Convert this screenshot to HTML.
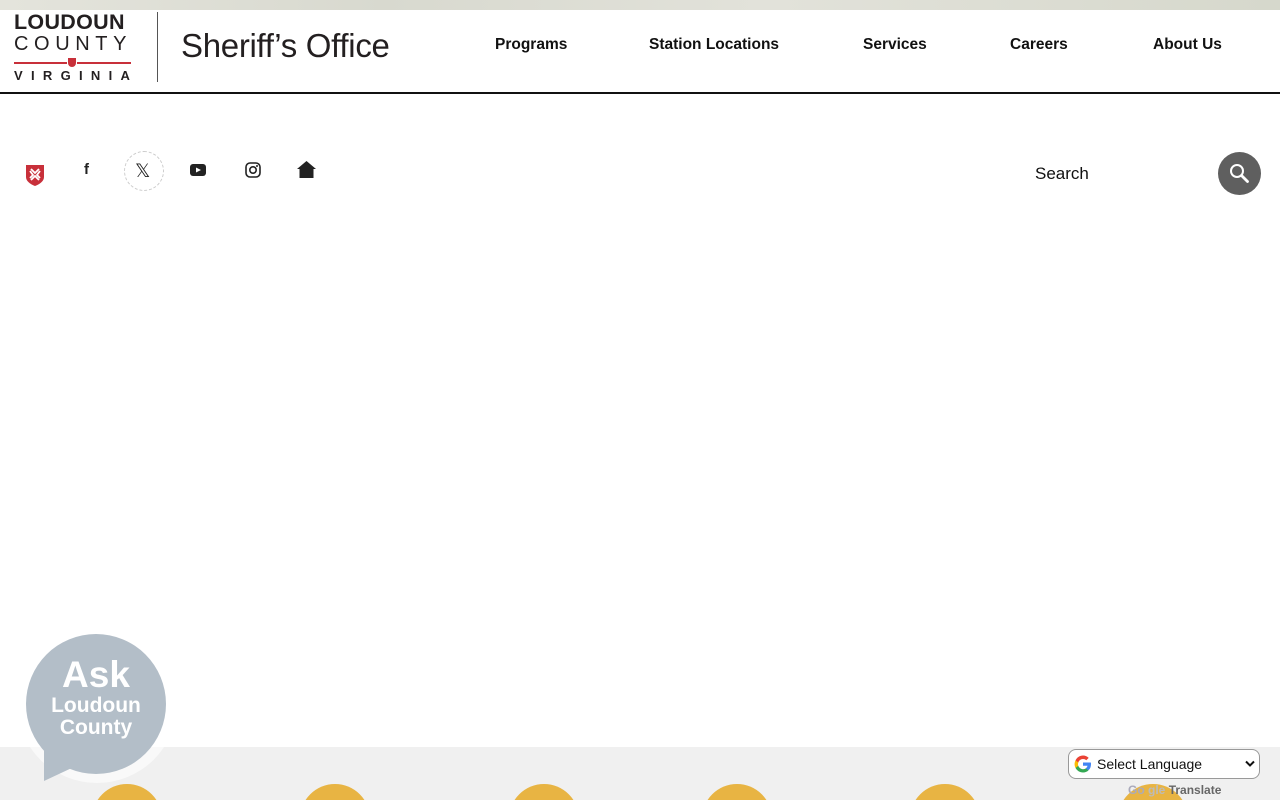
<!DOCTYPE html>
<html style="overflow:hidden"><head><meta charset="utf-8"><style>
*{margin:0;padding:0;box-sizing:border-box}
body{width:1280px;height:800px;overflow:hidden;background:#fff;font-family:"Liberation Sans",sans-serif;position:relative}
.topstrip{position:absolute;left:0;top:0;width:1280px;height:10px;background:linear-gradient(90deg,#e4e4dc,#d8d9cf 30%,#e2e2da 60%,#d6d8cc);}
.header{position:absolute;left:0;top:10px;width:1280px;height:84px;background:#fff;border-bottom:2px solid #111}
.lc{position:absolute;left:14px;top:0;width:118px;color:#231f20;font-weight:bold}
.nav a{position:absolute;top:26px;font-size:15.5px;font-weight:bold;color:#111;text-decoration:none}
.ic{position:absolute}
.bottom{position:absolute;left:0;top:747px;width:1280px;height:53px;background:#f0f0f0;overflow:hidden}
.yc{position:absolute;top:37px;width:70px;height:70px;border-radius:50%;background:#e8b443}
</style></head><body>
<div class="topstrip"></div>
<div class="header">
  <div class="lc">
    <div style="position:absolute;top:0;left:0;font-size:21.5px;letter-spacing:0.3px;line-height:24px">LOUDOUN</div>
    <div style="position:absolute;top:22px;left:0;font-size:20px;font-weight:normal;letter-spacing:5.6px;line-height:24px">COUNTY</div>
    <div style="position:absolute;top:52px;left:0;width:117px;height:1.5px;background:#c8303a"></div>
    <div style="position:absolute;top:47px;left:53px;width:10px;height:10px;background:#fff"></div>
    <div style="position:absolute;top:48px;left:54px;width:8px;height:9px;background:#c8303a;border-radius:0 0 4px 4px"></div>
    <div style="position:absolute;top:58px;left:0;font-size:13px;letter-spacing:8.3px;line-height:16px">VIRGINIA</div>
  </div>
  <div style="position:absolute;left:157px;top:2px;width:1px;height:70px;background:#555"></div>
  <div style="position:absolute;left:181px;top:17px;font-size:33px;color:#231f20;letter-spacing:-0.3px">Sheriff’s Office</div>
  <div class="nav">
    <a style="left:495px">Programs</a>
    <a style="left:649px">Station Locations</a>
    <a style="left:863px">Services</a>
    <a style="left:1010px">Careers</a>
    <a style="left:1153px">About Us</a>
  </div>
</div>

<svg class="ic" style="left:25px;top:164px" width="20" height="23" viewBox="0 0 20 23"><path d="M1 1h18v12c0 4-4 7-9 9C5 20 1 17 1 13z" fill="#c8303a"/><path d="M6 5l4 4 4-4M6 16l4-4 4 4M5 7l3 4-3 3M15 7l-3 4 3 3" stroke="#fff" stroke-width="1.8" fill="none"/></svg>
<div class="ic" style="left:84px;top:161px;font-size:15px;font-weight:bold;color:#222">f</div>
<div class="ic" style="left:124px;top:151px;width:40px;height:40px;border-radius:50%;border:1px dashed #ccc"></div>
<div class="ic" style="left:135px;top:160px;font-size:19px;color:#222;font-family:'DejaVu Sans',sans-serif">𝕏</div>
<svg class="ic" style="left:190px;top:164px" width="16" height="12"><rect width="16" height="12" rx="3" fill="#222"/><path d="M6 3.5l5 2.5-5 2.5z" fill="#fff"/></svg>
<svg class="ic" style="left:245px;top:162px" width="16" height="16"><rect x="1" y="1" width="14" height="14" rx="4" fill="none" stroke="#222" stroke-width="1.6"/><circle cx="8" cy="8" r="3.2" fill="none" stroke="#222" stroke-width="1.6"/><circle cx="12" cy="4" r="1" fill="#222"/></svg>
<svg class="ic" style="left:297px;top:161px" width="19" height="17"><path d="M9.5 0L0 8h2.5v9h14V8H19z" fill="#222"/></svg>

<div class="ic" style="left:1035px;top:164px;font-size:17px;color:#111">Search</div>
<div class="ic" style="left:1218px;top:152px;width:43px;height:43px;border-radius:50%;background:#5f5f5f"></div>
<svg class="ic" style="left:1228px;top:162px" width="22" height="22"><circle cx="9" cy="9" r="6" fill="none" stroke="#fff" stroke-width="2"/><path d="M13.5 13.5l6 6" stroke="#fff" stroke-width="2.8" stroke-linecap="round"/></svg>

<div class="bottom">
  <div class="yc" style="left:92px"></div>
  <div class="yc" style="left:300px"></div>
  <div class="yc" style="left:509px"></div>
  <div class="yc" style="left:702px"></div>
  <div class="yc" style="left:910px"></div>
  <div class="yc" style="left:1118px"></div>
</div>

<div class="ic" style="left:17px;top:625px;width:160px;height:158px;border-radius:50%;background:rgba(255,255,255,0.6)"></div>
<svg class="ic" style="left:26px;top:634px" width="142" height="148"><circle cx="70" cy="70" r="70" fill="#b3bec8"/><path d="M18 110 L18 147 L50 132z" fill="#b3bec8"/></svg>
<div class="ic" style="left:26px;top:656px;width:140px;text-align:center;color:#fff;font-weight:bold;line-height:1">
  <div style="font-size:37px">Ask</div>
  <div style="font-size:21px;margin-top:2px">Loudoun</div>
  <div style="font-size:21px;margin-top:1px">County</div>
</div>

<div class="ic" style="left:1068px;top:749px;width:192px;height:30px;border:1px solid #999;border-radius:8px;background:#fff"></div>
<svg class="ic" style="left:1074px;top:755px" width="18" height="18" viewBox="0 0 18 18"><path d="M17 9.2c0-.6 0-1.2-.2-1.7H9v3.3h4.5c-.2 1-.8 1.9-1.7 2.5v2h2.7c1.6-1.4 2.5-3.6 2.5-6.1z" fill="#4285f4"/><path d="M9 17.5c2.3 0 4.2-.8 5.5-2.1l-2.7-2c-.7.5-1.7.8-2.8.8-2.2 0-4-1.5-4.7-3.4H1.5v2.1C2.9 15.6 5.8 17.5 9 17.5z" fill="#34a853"/><path d="M4.3 10.8c-.4-1-.4-2.2 0-3.3V5.4H1.5a8.5 8.5 0 000 7.6z" fill="#fbbc05"/><path d="M9 4c1.2 0 2.4.4 3.3 1.3l2.4-2.4C13.2 1.4 11.2.5 9 .5 5.8.5 2.9 2.4 1.5 5.4l2.8 2.1C5 5.5 6.8 4 9 4z" fill="#ea4335"/></svg>
<div class="ic" style="left:1097px;top:756px;font-size:14px;color:#111">Select Language</div>
<svg class="ic" style="left:1245px;top:760px" width="10" height="8"><path d="M1 1.5l4 4 4-4" stroke="#111" stroke-width="2" fill="none"/></svg>
<div class="ic" style="left:1128px;top:783px;font-size:12px;color:#555;font-weight:bold;line-height:14px"><span style="color:#aab">Go</span> <span style="color:#bbb">gle</span> <span style="color:#666">Translate</span></div>
</body></html>
